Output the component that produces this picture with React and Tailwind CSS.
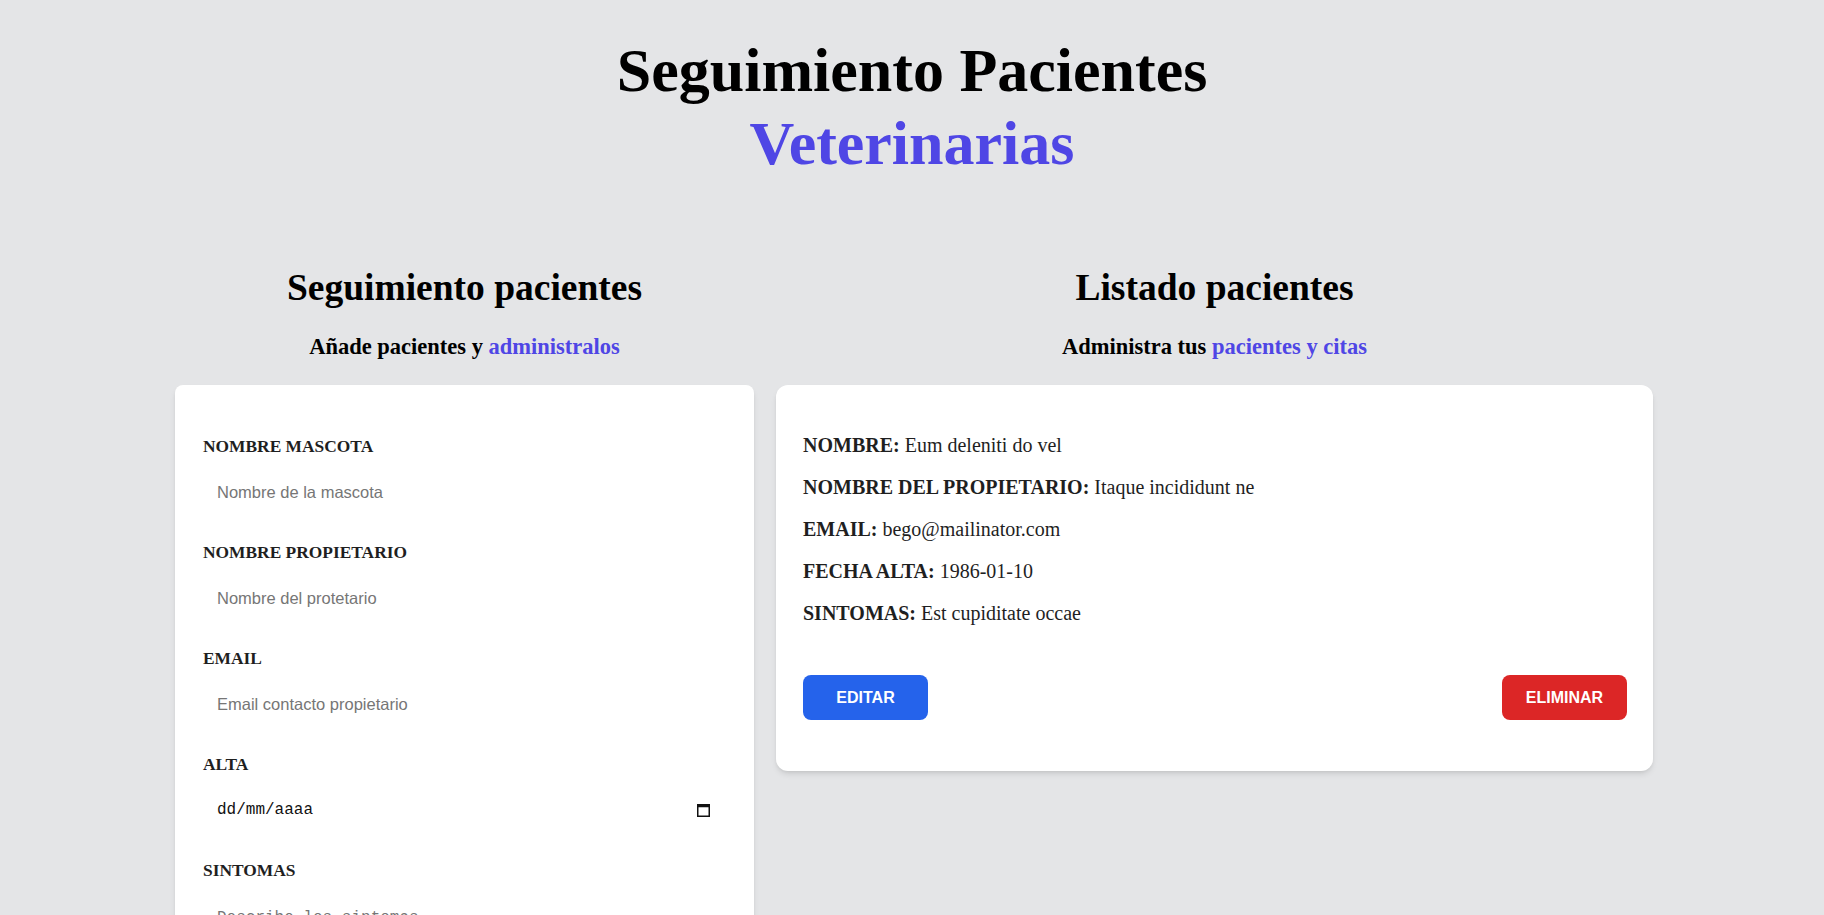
import React from "react";

function Field({ label, children, last }) {
  return (
    <div className={last ? "" : "mb-[27px]"}>
      <label className="block text-[17.4px] leading-6 font-bold uppercase text-[#1f1f1f]">
        {label}
      </label>
      <div className="mt-[13px]">{children}</div>
    </div>
  );
}

function TextInput({ placeholder, type = "text" }) {
  return (
    <input
      type={type}
      placeholder={placeholder}
      className="block w-full h-[42px] px-[14px] bg-white text-[16.5px] font-['Liberation_Sans',Arial,sans-serif] text-[#222] placeholder:text-[#767676] outline-none"
    />
  );
}

function CalendarIcon() {
  return (
    <svg width="13" height="14" viewBox="0 0 13 14" fill="none">
      <rect x="0.75" y="1.75" width="11.5" height="11.5" stroke="#111" strokeWidth="1.5" />
      <rect x="0.75" y="1.75" width="11.5" height="2.5" fill="#111" />
    </svg>
  );
}

function Row({ label, value }) {
  return (
    <p className="text-[20px] leading-7 mb-[14px] font-bold uppercase text-[#1f1f1f]">
      {label}{" "}
      <span className="font-normal normal-case">{value}</span>
    </p>
  );
}

export default function App() {
  return (
    <div className="min-h-screen bg-[#e4e5e7] font-['Liberation_Serif','Times_New_Roman',serif] text-[#111] overflow-hidden">
      <header className="pt-[34px]">
        <h1 className="text-center font-black text-[62px] leading-[73px] text-black">
          Seguimiento Pacientes
          <span className="block text-[#4f46e5]">Veterinarias</span>
        </h1>
      </header>

      <main className="mt-[86px] flex justify-center gap-[22px] pl-[4px]">
        <section className="w-[579px]">
          <h2 className="text-center font-black text-[37.5px] leading-[44px] text-black">
            Seguimiento pacientes
          </h2>
          <p className="mt-[22px] text-center text-[22.5px] leading-[30px] font-bold text-black">
            Añade pacientes y{" "}
            <span className="text-[#4f46e5]">administralos</span>
          </p>

          <form className="mt-[23px] bg-white rounded-lg shadow-md pt-[49px] px-[28px] pb-10">
            <Field label="Nombre Mascota">
              <TextInput placeholder="Nombre de la mascota" />
            </Field>
            <Field label="Nombre Propietario">
              <TextInput placeholder="Nombre del protetario" />
            </Field>
            <Field label="Email">
              <TextInput type="email" placeholder="Email contacto propietario" />
            </Field>
            <Field label="Alta">
              <div className="flex items-center h-[42px] pl-[14px] pr-[16px] bg-white">
                <input
                  type="text"
                  placeholder="dd/mm/aaaa"
                  className="flex-1 min-w-0 bg-transparent text-[16px] font-['Liberation_Mono','DejaVu_Sans_Mono',monospace] text-[#111] placeholder:text-[#111] outline-none"
                />
                <CalendarIcon />
              </div>
            </Field>
            <Field label="Sintomas" last>
              <textarea
                placeholder="Describe los sintomas"
                className="block w-full h-[110px] px-[14px] pt-[11px] bg-white text-[16px] font-['Liberation_Mono','DejaVu_Sans_Mono',monospace] placeholder:text-[#767676] outline-none resize-none"
              />
            </Field>
          </form>
        </section>

        <section className="w-[877px]">
          <h2 className="text-center font-black text-[37.5px] leading-[44px] text-black">
            Listado pacientes
          </h2>
          <p className="mt-[22px] text-center text-[22.5px] leading-[30px] font-bold text-black">
            Administra tus{" "}
            <span className="text-[#4f46e5]">pacientes y citas</span>
          </p>

          <div className="mt-[23px] bg-white rounded-xl shadow-md pt-[46px] pb-[51px] pl-[27px] pr-[26px]">
            <Row label="Nombre:" value="Eum deleniti do vel" />
            <Row label="Nombre del propietario:" value="Itaque incididunt ne" />
            <Row label="Email:" value="bego@mailinator.com" />
            <Row label="Fecha Alta:" value="1986-01-10" />
            <Row label="Sintomas:" value="Est cupiditate occae" />

            <div className="mt-[48px] flex justify-between">
              <button
                type="button"
                className="h-[45px] w-[125px] rounded-lg bg-[#2563eb] text-white font-bold uppercase text-[16px] font-['Liberation_Sans',Arial,sans-serif]"
              >
                Editar
              </button>
              <button
                type="button"
                className="h-[45px] w-[125px] rounded-lg bg-[#dc2626] text-white font-bold uppercase text-[16px] font-['Liberation_Sans',Arial,sans-serif]"
              >
                Eliminar
              </button>
            </div>
          </div>
        </section>
      </main>
    </div>
  );
}
